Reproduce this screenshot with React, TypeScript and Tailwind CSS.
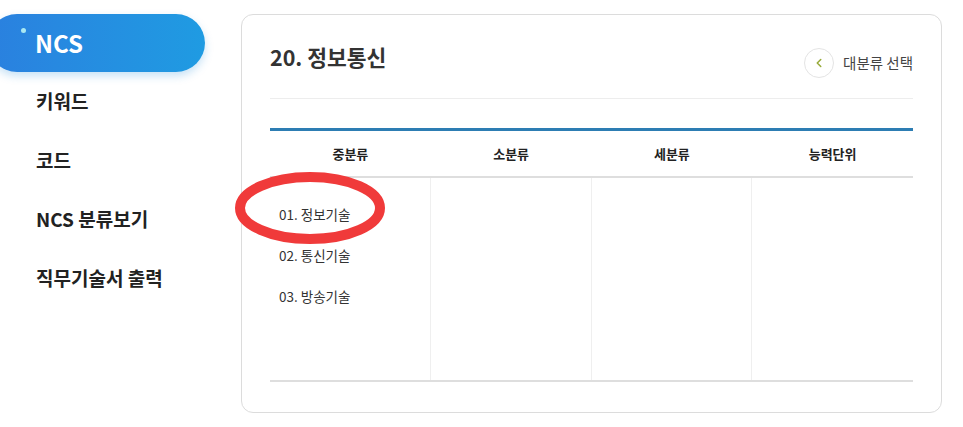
import { ChevronLeft } from 'lucide-react';

const NAV = ['키워드', '코드', 'NCS 분류보기', '직무기술서 출력'];
const COLS = ['중분류', '소분류', '세분류', '능력단위'];
const ITEMS = ['01. 정보기술', '02. 통신기술', '03. 방송기술'];

export default function App() {
  return (
    <div
      className="relative flex w-[963px] h-[427px] bg-white overflow-hidden text-[#222]"
      style={{ fontFamily: '"Noto Sans CJK KR", "Noto Sans", sans-serif' }}
    >
      {/* sidebar */}
      <div className="w-[241px] shrink-0 pt-[14px]">
        <div className="relative -ml-[12px] w-[217px] h-[58px] rounded-full bg-gradient-to-r from-[#2a80df] to-[#1f9be2] shadow-[0_4px_8px_rgba(30,140,220,0.25)] flex items-center pl-[47px]">
          <span className="absolute left-[33px] top-[14px] w-[5px] h-[5px] rounded-full bg-[#a9e8f2]" />
          <span className="text-white text-[24px] font-bold leading-none">NCS</span>
        </div>
        <ul className="pl-[36px]">
          {NAV.map((n) => (
            <li key={n} className="h-[59px] flex items-center text-[19px] font-bold text-[#222]">
              {n}
            </li>
          ))}
        </ul>
      </div>

      {/* panel */}
      <div className="mt-[14px] w-[701px] h-[399px] border border-[#dcdcdc] rounded-[12px] px-[28px] pt-[27px]">
        <div className="flex justify-between items-start">
          <h2 className="text-[21.5px] leading-[30px] font-bold text-[#333]">20. 정보통신</h2>
          <div className="flex items-center gap-[9px] mt-[6px]">
            <span className="w-[30px] h-[30px] rounded-full border border-[#e4e4e4] flex items-center justify-center">
              <ChevronLeft size={14} strokeWidth={2.6} className="text-[#98ab3a]" />
            </span>
            <span className="text-[14.5px] text-[#444]">대분류 선택</span>
          </div>
        </div>
        <div className="mt-[20px] h-px bg-[#ededed]" />
        <div className="mt-[29px] h-[3px] bg-[#2d7db3]" />
        <div className="grid grid-cols-4 h-[47px] border-b-2 border-[#dedede]">
          {COLS.map((c) => (
            <div key={c} className="flex items-center justify-center text-[13px] font-bold text-[#222]">
              {c}
            </div>
          ))}
        </div>
        <div className="grid grid-cols-4 h-[204px] border-b-2 border-[#dedede]">
          <div className="border-r border-[#efefef] pl-[9px] pt-[26px] flex flex-col gap-[21px]">
            {ITEMS.map((it) => (
              <div key={it} className="text-[13.5px] leading-[20px] text-[#333]">
                {it}
              </div>
            ))}
          </div>
          <div className="border-r border-[#efefef]" />
          <div className="border-r border-[#efefef]" />
          <div />
        </div>
      </div>

      {/* red annotation */}
      <svg className="absolute left-0 top-0 pointer-events-none" width="963" height="427">
        <ellipse cx="310" cy="208" rx="70" ry="31" fill="none" stroke="#f03a3a" strokeWidth="10" />
      </svg>
    </div>
  );
}
